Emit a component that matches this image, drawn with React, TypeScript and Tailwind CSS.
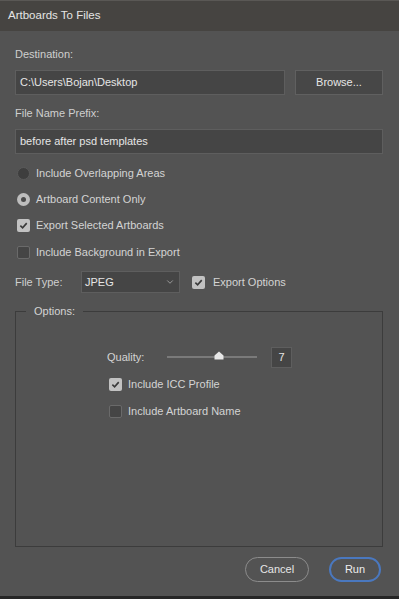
import { ChevronDown } from 'lucide-react';

const font = { fontFamily: '"Liberation Sans", Arial, sans-serif' };

function Check({ checked }: { checked: boolean }) {
  return checked ? (
    <span className="w-[13px] h-[13px] rounded-[2px] bg-[#c2c2c2] flex items-center justify-center shrink-0">
      <svg width="9" height="9" viewBox="0 0 10 10">
        <path d="M1.5 5.2 L4 7.6 L8.6 2.4" fill="none" stroke="#3a3a3a" strokeWidth="1.8" />
      </svg>
    </span>
  ) : (
    <span className="w-[13px] h-[13px] rounded-[2px] bg-[#454545] border border-[#6a6a6a] shrink-0" />
  );
}

function Radio({ checked }: { checked: boolean }) {
  return checked ? (
    <span className="w-[13px] h-[13px] rounded-full bg-[#bdbdbd] flex items-center justify-center shrink-0">
      <span className="w-[5px] h-[5px] rounded-full bg-[#4a4a4a]" />
    </span>
  ) : (
    <span className="w-[13px] h-[13px] rounded-full bg-[#3e3e3e] border border-[#5a5a5a] shrink-0" />
  );
}

function Row({ children, label }: { children: React.ReactNode; label: string }) {
  return (
    <div className="h-4 flex items-center gap-[6px] pl-[2px]">
      {children}
      <span className="text-[#d4d4d4]">{label}</span>
    </div>
  );
}

export default function App() {
  return (
    <div className="w-[399px] h-[599px] bg-[#535353] flex flex-col text-[11px] overflow-hidden" style={font}>
      {/* Title bar */}
      <div className="h-[31px] bg-[#464441] border-t border-[#5a5855] flex items-center px-2 text-[11.5px] text-[#e4e4e4] shrink-0">
        Artboards To Files
      </div>

      <div className="flex-1 flex flex-col px-[15px] pt-[15px]">
        <div className="h-4 flex items-center text-[#cfcfcf]">Destination:</div>
        <div className="mt-2 flex gap-[10px]">
          <div className="w-[270px] h-[25px] bg-[#454545] border border-[#5e5e5e] flex items-center px-[4px] text-[#e6e6e6]">
            C:\Users\Bojan\Desktop
          </div>
          <button className="w-[88px] h-[25px] bg-[#474747] border border-[#606060] text-[#e6e6e6] flex items-center justify-center">
            Browse...
          </button>
        </div>

        <div className="mt-[10px] h-4 flex items-center text-[#cfcfcf]">File Name Prefix:</div>
        <div className="mt-2 h-[25px] w-[368px] bg-[#454545] border border-[#5e5e5e] flex items-center px-[4px] text-[#e6e6e6]">
          before after psd templates
        </div>

        <div className="mt-[11px] flex flex-col gap-[10px]">
          <Row label="Include Overlapping Areas"><Radio checked={false} /></Row>
          <Row label="Artboard Content Only"><Radio checked /></Row>
          <Row label="Export Selected Artboards"><Check checked /></Row>
          <div className="mt-[1px]">
            <Row label="Include Background in Export"><Check checked={false} /></Row>
          </div>
        </div>

        <div className="mt-[11px] flex items-center h-[22px]">
          <span className="w-[66px] text-[#cfcfcf]">File Type:</span>
          <div className="w-[99px] h-[22px] bg-[#454545] border border-[#5e5e5e] flex items-center justify-between pl-[3px] pr-[4px] text-[#e6e6e6]">
            <span>JPEG</span>
            <ChevronDown className="w-[10px] h-[10px] text-[#a8a8a8]" strokeWidth={2} />
          </div>
          <div className="ml-[12px] flex items-center gap-[8px]">
            <Check checked />
            <span className="text-[#d4d4d4]">Export Options</span>
          </div>
        </div>

        {/* Options group */}
        <fieldset className="mt-[10px] w-[368px] h-[244px] border border-[#3c3c3c]">
          <legend className="ml-[10px] px-2 text-[#d4d4d4]">Options:</legend>
          <div className="pl-[91px]">
            <div className="mt-[27px] flex items-center h-[21px]">
              <span className="w-[60px] text-[#d4d4d4]">Quality:</span>
              <div className="w-[90px] h-[21px] flex items-center">
                <div className="w-[90px] h-[2px] bg-[#7a7a7a] flex items-center">
                  <svg width="10" height="9" viewBox="0 0 10 9" className="ml-[47px] -mt-[3px]">
                    <path d="M5 0.5 L9.5 4.5 L9.5 8.5 L0.5 8.5 L0.5 4.5 Z" fill="#e8e8e8" />
                  </svg>
                </div>
              </div>
              <div className="ml-[14px] w-[21px] h-[21px] bg-[#454545] border border-[#5e5e5e] flex items-center justify-center text-[#e6e6e6]">
                7
              </div>
            </div>
            <div className="mt-[9px] flex flex-col gap-[11px]">
              <Row label="Include ICC Profile"><Check checked /></Row>
              <Row label="Include Artboard Name"><Check checked={false} /></Row>
            </div>
          </div>
        </fieldset>

        <div className="mt-[10px] flex justify-end gap-[20px] pr-[3px]">
          <button className="w-[64px] h-[25px] rounded-full border border-[#8c8c8c] text-[#e6e6e6] flex items-center justify-center">
            Cancel
          </button>
          <button className="w-[52px] h-[25px] rounded-full border-2 border-[#4a78bf] text-[#eeeeee] flex items-center justify-center">
            Run
          </button>
        </div>
      </div>

      <div className="h-[3px] bg-[#262626] shrink-0" />
    </div>
  );
}
